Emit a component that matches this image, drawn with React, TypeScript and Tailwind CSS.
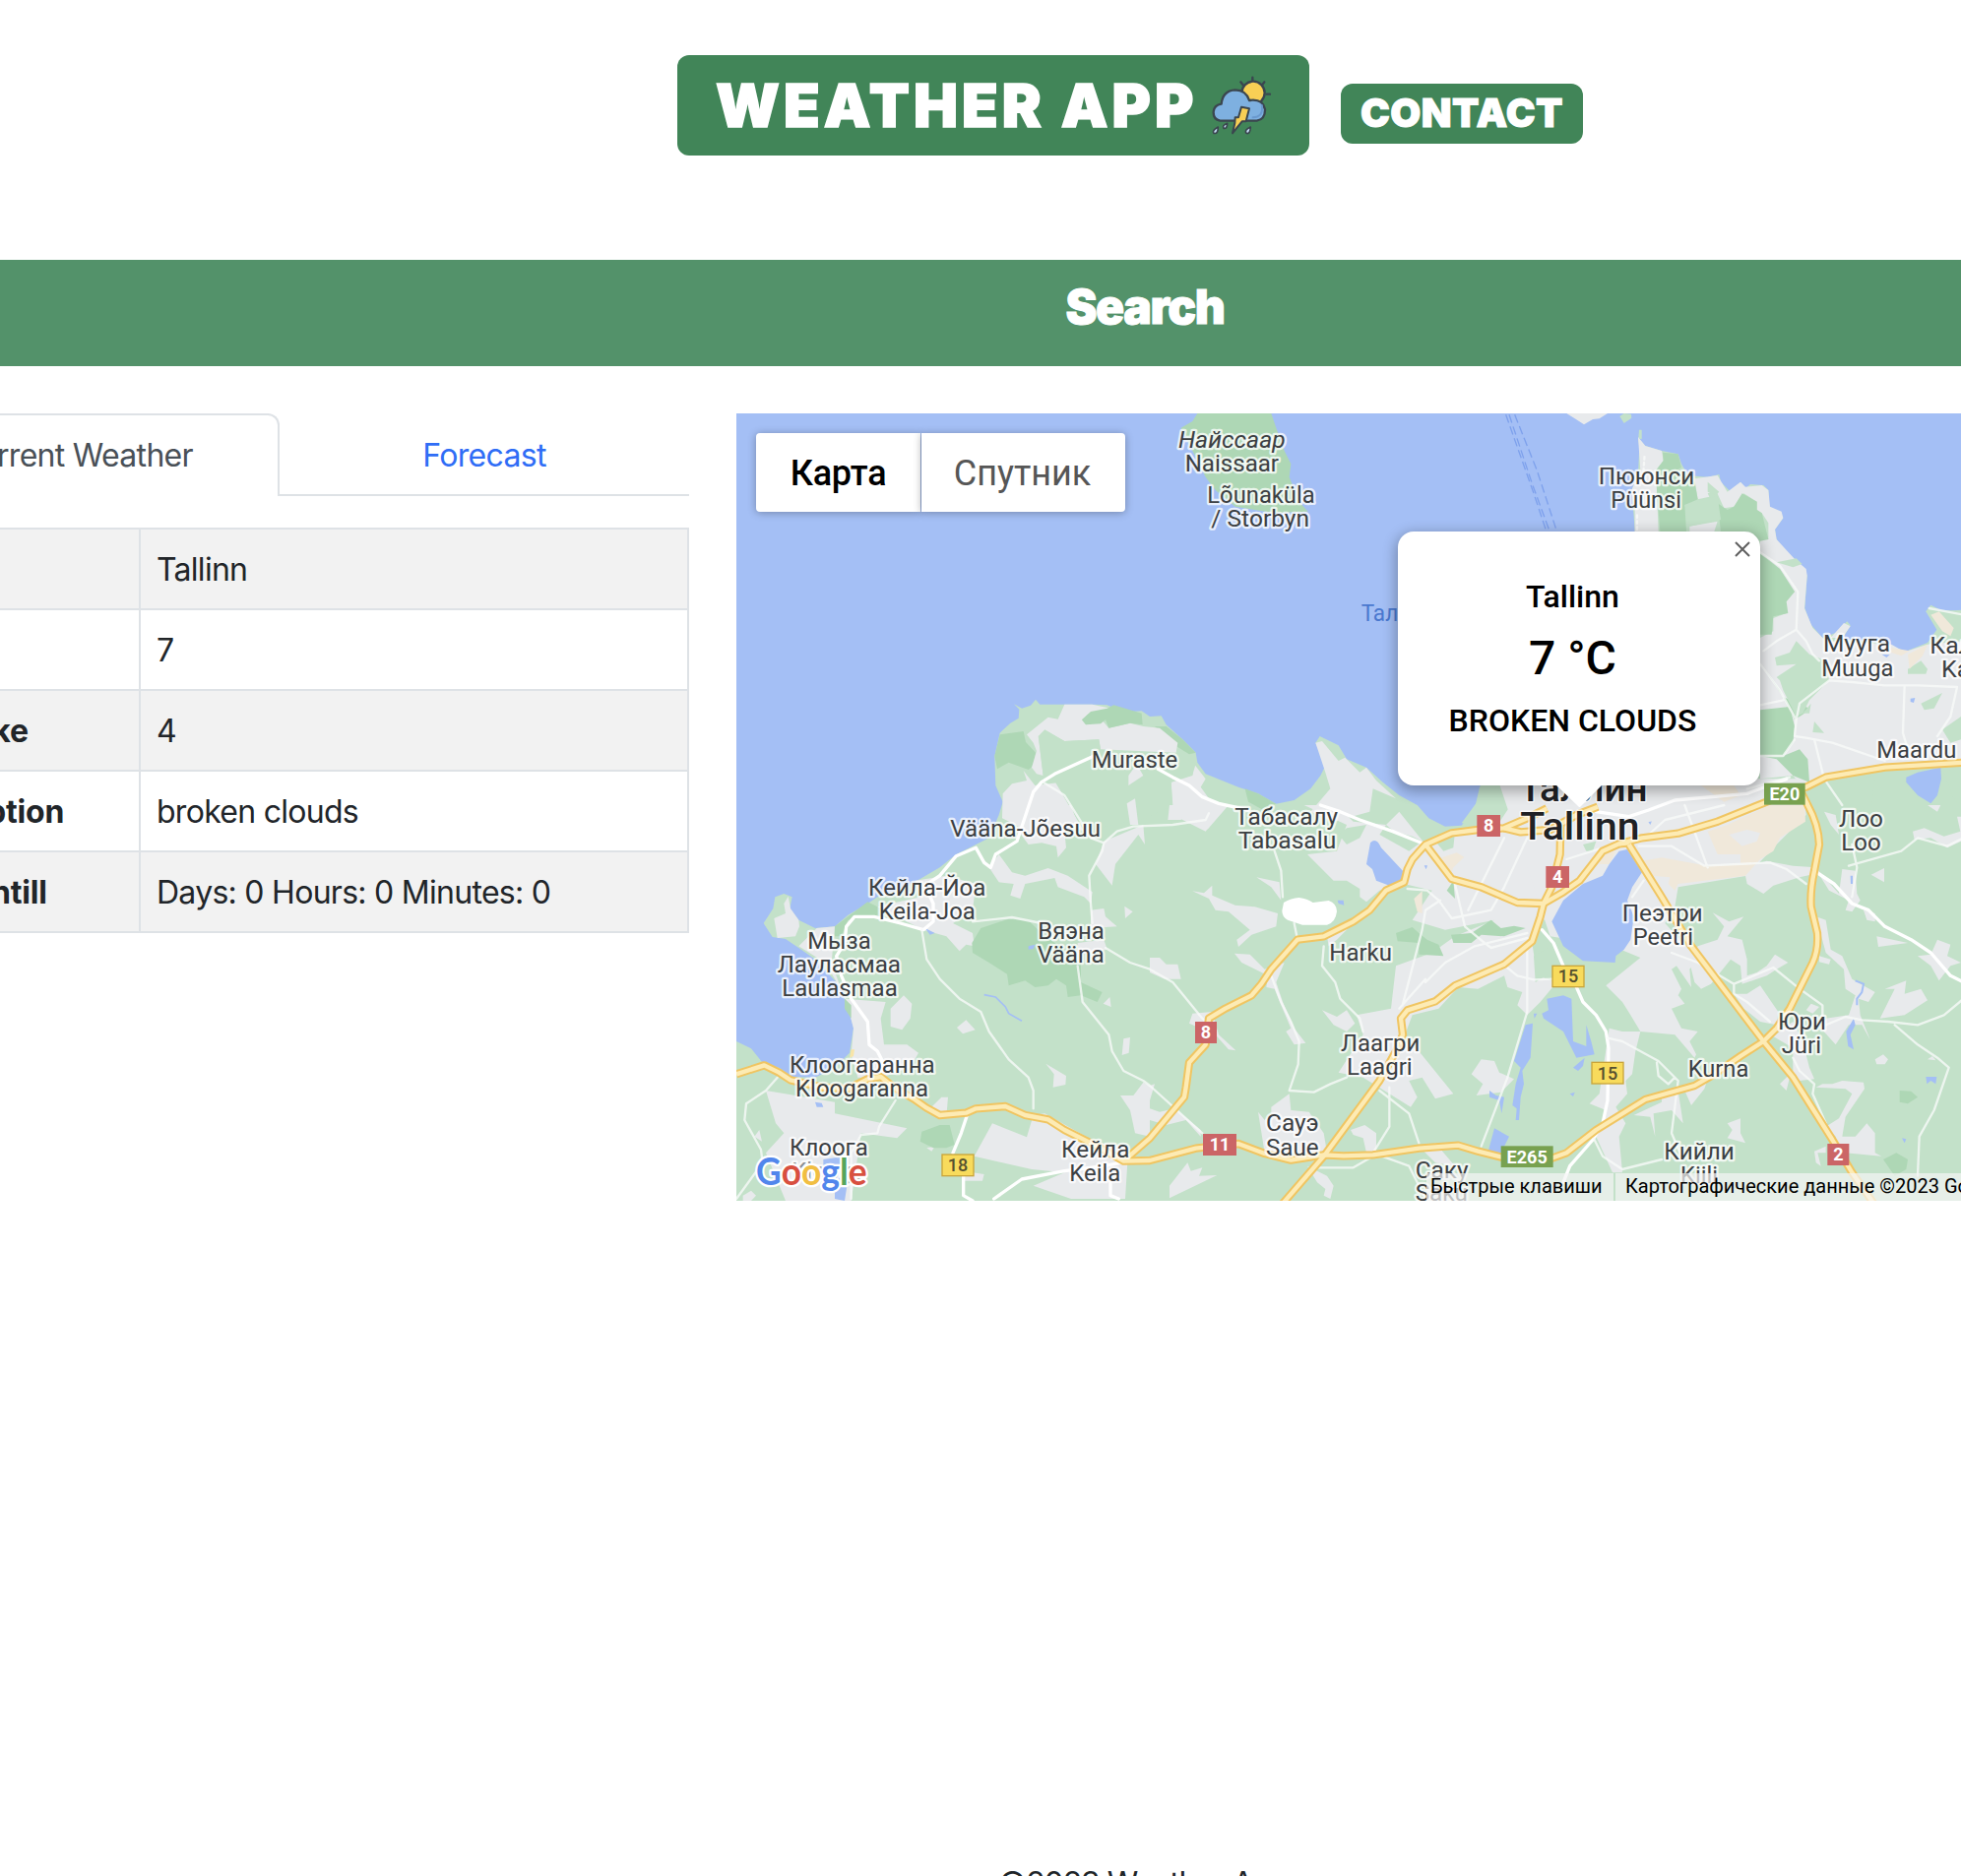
import React from "react";

const GREEN = "#c3e1c9";
const WOOD = "#aed7b5";
const TOWN = "#e8eaec";
const WATER = "#a4bff5";
const SAND = "#f0e8da";

type Label = { t: string; x1: number; x2: number; y: number; size?: number; color?: string; italic?: boolean; weight?: number; halo?: boolean };

const labels: Label[] = [
  { t: "Muraste", x1: 1085, x2: 1342, y: 1087 },
  { t: "Vääna-Jõesuu", x1: 655, x2: 1107, y: 1297 },
  { t: "Кейла-Йоа", x1: 405, x2: 757, y: 1475 },
  { t: "Keila-Joa", x1: 437, x2: 725, y: 1547 },
  { t: "Мыза", x1: 220, x2: 407, y: 1638 },
  { t: "Лауласмаа", x1: 128, x2: 498, y: 1710 },
  { t: "Laulasmaa", x1: 142, x2: 488, y: 1783 },
  { t: "Вяэна", x1: 922, x2: 1118, y: 1608 },
  { t: "Vääna", x1: 920, x2: 1118, y: 1681 },
  { t: "Клоогаранна", x1: 165, x2: 602, y: 2015 },
  { t: "Kloogaranna", x1: 183, x2: 582, y: 2088 },
  { t: "Клоога", x1: 165, x2: 398, y: 2268 },
  { t: "Klooga", x1: 172, x2: 390, y: 2341, color: "#8b8f92" },
  { t: "Кейла", x1: 993, x2: 1195, y: 2275 },
  { t: "Keila", x1: 1018, x2: 1168, y: 2346 },
  { t: "Найссаар", x1: 1350, x2: 1670, y: 110, italic: true },
  { t: "Naissaar", x1: 1370, x2: 1650, y: 182 },
  { t: "Lõunaküla", x1: 1438, x2: 1760, y: 278 },
  { t: "/ Storbyn", x1: 1450, x2: 1743, y: 350 },
  { t: "Таллиннский", x1: 1907, x2: 2320, y: 640, color: "#4a78cf", halo: false },
  { t: "Пююнси", x1: 2630, x2: 2917, y: 222 },
  { t: "Püünsi", x1: 2668, x2: 2877, y: 295 },
  { t: "Мууга", x1: 3315, x2: 3513, y: 733 },
  { t: "Muuga", x1: 3310, x2: 3523, y: 806 },
  { t: "Каллавере", x1: 3640, x2: 4010, y: 738 },
  { t: "Kallavere", x1: 3675, x2: 3975, y: 810 },
  { t: "Maardu", x1: 3478, x2: 3715, y: 1057 },
  { t: "Табасалу", x1: 1522, x2: 1830, y: 1260 },
  { t: "Tabasalu", x1: 1532, x2: 1825, y: 1332 },
  { t: "Harku", x1: 1810, x2: 1995, y: 1673 },
  { t: "Лаагри", x1: 1845, x2: 2080, y: 1950 },
  { t: "Laagri", x1: 1863, x2: 2057, y: 2022 },
  { t: "Сауэ", x1: 1617, x2: 1772, y: 2194 },
  { t: "Saue", x1: 1617, x2: 1772, y: 2267 },
  { t: "Саку", x1: 2072, x2: 2228, y: 2338 },
  { t: "Saku", x1: 2072, x2: 2226, y: 2406 },
  { t: "Лоо", x1: 3363, x2: 3492, y: 1265 },
  { t: "Loo", x1: 3370, x2: 3485, y: 1337 },
  { t: "Пеэтри", x1: 2702, x2: 2942, y: 1553 },
  { t: "Peetri", x1: 2735, x2: 2913, y: 1626 },
  { t: "Юри", x1: 3177, x2: 3318, y: 1885 },
  { t: "Jüri", x1: 3188, x2: 3303, y: 1957 },
  { t: "Kurna", x1: 2903, x2: 3082, y: 2027 },
  { t: "Кийли", x1: 2830, x2: 3038, y: 2280 },
  { t: "Kiili", x1: 2880, x2: 2988, y: 2352 },
  { t: "Таллин", x1: 2388, x2: 2774, y: 1187, size: 114, color: "#202124", weight: 500 },
  { t: "Tallinn", x1: 2392, x2: 2750, y: 1306, size: 114, color: "#202124", weight: 500 },
];

type Shield = { t: string; x: number; y: number; w: number; h: number; kind: "red" | "yellow" | "green" };

const shields: Shield[] = [
  { t: "18", x: 625, y: 2263, w: 100, h: 69, kind: "yellow" },
  { t: "8", x: 2257, y: 1230, w: 71, h: 66, kind: "red" },
  { t: "4", x: 2467, y: 1386, w: 71, h: 66, kind: "red" },
  { t: "15", x: 2485, y: 1688, w: 100, h: 68, kind: "yellow" },
  { t: "8", x: 1398, y: 1860, w: 66, h: 66, kind: "red" },
  { t: "11", x: 1422, y: 2202, w: 102, h: 66, kind: "red" },
  { t: "E265", x: 2330, y: 2239, w: 159, h: 65, kind: "green" },
  { t: "15", x: 2605, y: 1982, w: 100, h: 69, kind: "yellow" },
  { t: "2", x: 3325, y: 2232, w: 66, h: 66, kind: "red" },
  { t: "E20", x: 3132, y: 1133, w: 125, h: 66, kind: "green" },
];
const shieldFill = { red: "#cb6566", yellow: "#f8db5c", green: "#78a150" };
const shieldInk = { red: "#fff", yellow: "#55502f", green: "#fff" };

const highways = [
  "M0 2020L85 1993L130 2015L165 2038L260 2060L340 2065L400 2035L440 2028L480 2060L540 2095L580 2123L620 2145L700 2138L730 2125L820 2118L880 2145L950 2158L1000 2190L1100 2240L1180 2285L1260 2283L1400 2246L1530 2232L1610 2262L1690 2282L1790 2266L1850 2269L1940 2266L2080 2246L2200 2237L2260 2255L2340 2275L2480 2278L2530 2260L2620 2190L2770 2097L2920 2055L2980 2020L3060 1965L3130 1920L3170 1880L3210 1820L3280 1680Q3298 1640 3294 1590L3275 1510Q3272 1460 3285 1400L3300 1320Q3298 1260 3265 1200L3240 1150",
  "M1180 2285L1260 2215L1365 2090L1370 2060L1380 1985L1430 1930L1440 1850L1490 1820L1570 1780L1600 1745L1630 1700L1710 1610L1790 1600L1880 1555L1930 1520L1980 1460L2035 1435L2045 1395L2060 1365L2100 1320L2180 1285L2260 1275L2340 1270L2410 1240L2470 1210",
  "M2340 1270L2390 1282L2480 1275L2560 1230L2625 1205",
  "M2100 1320L2180 1425L2270 1450L2380 1497L2460 1500L2520 1465L2570 1430L2640 1340L2690 1318L2720 1315",
  "M1660 2420L1790 2270L1960 2040L2010 1950L2031 1900L2025 1850L2045 1825L2130 1798L2190 1750L2340 1685L2425 1615L2450 1540L2460 1500L2485 1450L2510 1350L2512 1250",
  "M2720 1320L2820 1480L2910 1630L3130 1920L3220 2030L3340 2220L3400 2320L3470 2420",
  "M2690 1318L2760 1300L2870 1286L2990 1250L3140 1190L3200 1165L3260 1145L3320 1115L3500 1085L3740 1070",
];

const coast =
  "M0 1920L45 1942L80 1985L130 2000L170 2028L240 2030L300 2000L345 1955L357 1880L345 1830L330 1795L325 1760L300 1735L240 1670L190 1635L150 1608L110 1602L83 1560L112 1515L118 1480L145 1470L170 1480L163 1515L190 1550L240 1575L300 1570L340 1535L400 1500L430 1480L500 1455L560 1425L620 1390L670 1350L720 1325L770 1300L800 1230L812 1190L790 1140L787 1050L803 980L835 950L860 935L862 908L846 892L870 905L897 896L912 878L925 893L1085 893L1130 895L1160 908L1200 915L1235 913L1260 930L1295 928L1310 955L1360 1000L1400 1040L1405 1070L1430 1105L1530 1145L1590 1165L1645 1196L1700 1185L1750 1150L1780 1110L1795 1080L1765 1010L1778 990L1835 1018L1860 1060L1920 1085L1970 1130L2020 1170L2075 1200L2110 1240L2160 1265L2210 1262L2250 1210L2265 1145L2350 1000L2600 700L2738 366L2735 320L2728 240L2748 190L2752 110L2748 80L2770 105L2820 120L2870 130L2880 160L2900 195L2960 200L2995 192L3000 215L3030 245L3060 215L3075 235L3090 222L3130 225L3145 240L3148 290L3165 305L3180 303L3190 325L3165 360L3170 390L3190 420L3225 450L3255 480L3263 500L3256 600L3275 650L3310 690L3350 675L3385 640L3395 652L3370 695L3430 700L3500 705L3560 733L3630 705L3658 665L3625 610L3640 592L3675 610L3740 605L3740 2420L0 2420Z";

function MapCanvas() {
  return (
    <svg className="block h-full w-full" viewBox="0 6 3732 2400" preserveAspectRatio="none" aria-label="Tallinn">
      <rect width="3740" height="2420" fill={WATER} />
      <path d={coast} fill={GREEN} />
      {/* Naissaar and the northern islets */}
      <path d="M1405 6L1390 30L1355 50L1390 120L1430 200L1460 240L1520 290L1640 310L1742 305L1715 275L1685 200L1690 160L1670 120L1645 50L1630 6Z" fill={WOOD} />
      <path d="M2530 6L2560 25L2583 40L2610 24L2630 22L2655 6Z" fill={TOWN} />
      <path d="M2692 15L2705 6L2727 8L2728 20L2705 36ZM2751 56L2759 56L2759 85L2749 82Z" fill={GREEN} />
      {/* ferry lines */}
      <path d="M2345 10L2430 250L2470 370M2372 10L2440 180L2500 365M2355 10L2425 220L2480 370" stroke="#7ea1ec" strokeWidth="4" strokeDasharray="26 12" fill="none" />

      {/* Muraste and the north-west coast */}
      <g>
        <g fill={WOOD}>
          <path d="M803 985L875 975L882 1008L912 1040L905 1080L890 1092L830 1070L795 1090L787 1050Z" />
          <path d="M1275 960L1310 960L1360 1000L1400 1040L1380 1045L1340 1020Z" />
          <path d="M1550 1150L1590 1165L1645 1196L1600 1212L1560 1190Z" />
        </g>
        <g fill={TOWN}>
          <path d="M1000 893L1085 893L1140 905L1110 918L1075 920L1053 940L1065 955L1115 942L1135 965L1200 950L1240 960L1290 965L1345 1010L1340 1040L1110 1030L1105 1000L1000 1005L940 970L920 990L935 1110L915 1105L900 1085L915 1035L905 1010L885 985L950 932L980 938Z" />
          <path d="M812 1165L840 1135L885 1125L875 1095L910 1140L990 1130L990 1160L1060 1280L1020 1265L870 1270L810 1240Z" />
          <path d="M1325 1130L1390 1110L1440 1180L1490 1200L1430 1280L1330 1230ZM1395 1075L1430 1120L1415 1145L1390 1110Z" />
          <path d="M1765 1010L1785 1005L1835 1065L1855 1055L1900 1100L1920 1085L1950 1125L2010 1180L1940 1150L1930 1220L1820 1250L1750 1220L1810 1150L1795 1100Z" />
        </g>
        <path d="M1053 940L1080 915L1130 905L1150 895L1235 920L1238 955L1200 950L1135 965L1125 940L1110 952L1065 955Z" fill={WOOD} />
        {/* open fields between the settlements */}
        <path d="M1110 1032L1340 1042L1400 1075L1390 1108L1325 1130L1330 1200L1250 1240L1150 1260L1060 1280L990 1160L960 1110L935 1110L922 1000L940 972L1000 1005L1105 1000Z" fill={GREEN} />
        <path d="M1195 1110L1220 1075L1240 1110L1195 1140ZM1190 1195L1215 1180L1225 1260L1200 1260Z" fill={TOWN} />
      </g>

      {/* Keila-Joa and Kloogaranna */}
      <g transform="translate(0 1200)">
        <g fill={TOWN}>
          <path d="M115 345L150 330L145 300L158 278L165 315L190 350L192 370L180 400L125 405Z" />
          <path d="M190 430L245 375L300 370L290 480L330 590L455 600L440 650L450 730L520 730L555 755L530 800L440 830L370 830L350 760L357 680L330 580L270 480Z" />
          <path d="M545 230L640 215L730 240L720 320L660 360L720 390L725 430L700 425L680 445L640 400L570 380L430 310L560 280Z" />
          <path d="M770 190L800 150L840 205L880 215L950 192L1010 215L1085 265L1080 300L1060 280L980 250L970 222L880 240L865 285L835 275L845 240L800 235Z" />
          <path d="M820 0L1020 0L1040 60L1000 80L1005 130L980 160L975 125L930 115L890 120L860 80L860 30Z" />
          <path d="M1120 110L1240 60L1245 120L1225 90L1155 180L1145 245L1095 180ZM1080 320L1120 315L1125 340L1160 370L1080 375ZM1183 308L1208 325L1185 345Z" />
          <path d="M1040 420L1120 410L1130 440L1040 455ZM1118 605L1138 585L1142 615ZM1180 712L1200 708L1196 755L1175 762Z" />
          <path d="M470 620L510 580L535 605L530 650L505 685L470 675ZM672 678L700 655L728 685L690 697ZM943 788L1005 825L1003 852L965 860L968 820Z" />
          <path d="M90 870L180 885L300 905L300 940L520 985L490 1015L380 1000L350 1206L150 1206L90 1060L145 1000L120 970ZM590 925L625 890L645 890L640 950Z" />
          <path d="M780 970L885 1012L905 945L940 940L1100 1030L1195 1040L1185 1200L1020 1200L905 1160L1000 1120L900 1110L725 1070ZM1170 885L1210 885L1240 845L1260 855L1260 1010L1215 1000L1200 930Z" />
          <path d="M20 1190L45 1175L60 1190L45 1206L20 1206ZM580 1045L605 1040L595 1055ZM690 1115L755 1125L750 1145L690 1145ZM55 1010L70 990L78 1025Z" />
        </g>
        <g fill={WOOD}>
          <path d="M745 375L830 347L890 352L930 390L1050 480L1050 540L1115 570L1100 600L1050 580L1010 585L1005 550L975 530L950 550L910 555L880 535L830 550L825 515L770 480L720 450L718 420Z" />
          <path d="M565 995L620 975L650 975L665 1035L640 1045L600 1045L560 1025ZM300 370L400 295L430 310L430 335L340 350L320 400L300 400ZM330 590L350 610L350 650L330 620Z" />
        </g>
        <g fill={WATER}>
          <path d="M265 1080L330 1070L345 1110L330 1206L300 1200L300 1130L265 1110ZM240 905L260 908L265 920L245 920ZM890 430L910 425L905 438L890 440ZM575 375L605 390L590 395Z" />
        </g>
        <path d="M755 578L790 585L820 615L830 635L870 658" stroke={WATER} strokeWidth="5" fill="none" />
        <path d="M350 745L360 745L357 765L345 770Z" fill="#f8e5a8" />
      </g>

      {/* Tabasalu, Harku, Saue and western Tallinn */}
      <g transform="translate(1260 1200)">
        <g fill={TOWN}>
          <path d="M60 0L115 0L95 45L55 45ZM175 45L200 0L240 0L175 75ZM470 0L570 0L620 50L720 60L760 20L840 120L780 190L760 220L780 240L700 260L660 295L640 280L640 255L600 230L560 230L480 150L570 140L600 60Z" />
          <path d="M840 120L950 70L1060 60L1100 0L1260 0L1260 310L1200 350L1165 420L1180 520L1240 540L1190 600L1150 640L1120 610L1135 570L1090 555L1080 520L1000 560L940 555L880 620L800 640L770 720L820 750L925 880L870 895L830 830L790 840L815 890L795 920L730 880L650 830L575 815L650 700L630 640L735 620L750 490L860 450L930 400L1050 350L900 380L800 350L860 260L775 240L800 160Z" />
          <path d="M130 262L165 268L190 245L190 275L260 305L320 310L390 330L385 370L310 395L270 432L265 410L305 380L240 325L200 320L180 285ZM325 220L395 235L400 290L370 250Z" />
          <path d="M0 465L30 465L50 485L85 485L95 530L45 530L0 510ZM258 452L305 455L350 500L410 480L385 540L405 600L440 680L475 725L440 730L415 690L430 680L400 610L380 560L355 555L360 520L280 480Z" />
          <path d="M130 635L190 630L210 700L262 748L240 745L200 700L120 665ZM540 400L610 370L570 410L545 430ZM525 625L570 645L600 625L625 665L600 690L560 670Z" />
          <path d="M0 925L30 935L75 925L155 990L155 1010L110 960L50 975L0 960ZM370 920L425 880L430 930L485 935L530 1000L540 1060L350 1060L330 935L350 960L370 940Z" />
          <path d="M60 1160L115 1090L125 1115L160 1105L150 1130L205 1128L60 1198ZM480 1100L540 1130L560 1160L550 1200L530 1190L535 1170L510 1150ZM612 990L655 975L690 1000L690 1060L660 1060L650 1015L620 1005Z" />
          <path d="M980 820L1010 775L1050 780L1065 815L1110 835L1070 875L995 885L1015 850ZM830 1050L870 1030L930 1100L870 1090ZM0 855L15 850L0 900Z" />
        </g>
        <g fill={GREEN}>
          <path d="M600 70L660 60L640 100L600 120L575 90ZM720 60L745 80L800 95L830 110L790 140L700 90ZM870 110L930 80L925 130L895 140ZM1170 460L1240 420L1240 500L1175 540Z" />
          <path d="M950 55L1005 -20L1060 -55L1085 10L1060 55Z" />
        </g>
        <g fill={WOOD}>
          <path d="M750 390L800 372L820 390L845 410L880 425L895 460L820 455L820 420L755 415ZM918 395L980 390L1040 350L1070 375L1110 368L1145 375L1080 400L1010 395L980 420L925 420ZM905 260L925 230L930 285Z" />
        </g>
        <path d="M890 160L935 145L958 158L925 190L915 215L890 180ZM805 285L830 262L830 330L815 325Z" fill={SAND} />
        <g fill={WATER}>
          <path d="M672 115Q690 95 705 130L775 205L770 235L730 245L690 230L678 195L660 180ZM572 290L590 290L592 305L575 300ZM836 184L846 184L842 196Z" />
          <path d="M1145 670L1167 665L1160 770L1135 810L1140 850L1130 890L1125 960L1115 960L1118 925L1105 915L1115 850L1130 800L1110 780ZM1035 870L1055 885L1080 890L1072 940L1065 900L1035 890ZM1050 985L1095 1010L1065 1070L1030 1060ZM1210 590L1260 580L1285 590L1290 720L1330 735L1330 670L1345 720L1355 760L1300 770L1260 690L1200 650L1195 635L1215 625ZM1170 635L1180 635L1172 650Z" />
        </g>
      </g>

      {/* eastern Tallinn, Peetri and Jüri */}
      <g transform="translate(2520 1200)">
        <g fill={TOWN}>
          <path d="M-200 -80L730 -80L740 30L640 130L560 215L350 250L340 310L310 360L410 470L385 500L390 555L345 490L330 500L360 560L350 580L370 605L330 620L360 680L410 690L385 720L405 760L400 770L340 700L235 690L205 640L180 600L130 550L235 465L150 430L-40 400Z" />
          <path d="M550 190L620 170L700 185L770 190L765 210L720 220L640 245L610 270L560 240ZM760 180L840 270L850 195L890 200L895 270L905 290L880 325L860 320L870 290L810 260ZM938 212L978 192L978 235Z" />
          <path d="M795 20L830 30L840 90L815 60ZM1065 80L1100 70L1160 95L1210 80L1200 35L1212 35L1212 110L1170 130L1120 100L1070 105ZM1110 0L1150 0L1140 20Z" />
          <path d="M455 328L505 355L550 340L500 400L545 410L560 470L560 520L590 510L620 490L645 455L685 480L650 500L620 520L545 545L540 490L510 470L450 545L420 560L400 540L385 480L410 430L470 410L490 370Z" />
          <path d="M770 340L800 350L815 440L850 460L880 530L950 570L930 600L900 590L905 640L935 715L910 670L870 670L830 730L785 680L800 650L870 640L890 580L860 560L855 500L800 450ZM780 460L815 470L810 485L780 478Z" />
          <path d="M955 400L1050 420L960 432ZM1080 460L1120 455L1140 410L1180 425L1170 460L1212 480L1180 490L1145 535L1120 490ZM915 320L950 330L950 355L925 350ZM965 650L1010 560L980 560L1045 535L1040 575L1090 560L1110 595L1040 640Z" />
          <path d="M520 575L560 575L600 550L655 630L650 670L600 660L550 620ZM740 625L755 605L780 615L760 635ZM640 705L700 660L730 720L750 800L765 835L720 840L690 830L680 870L660 850L700 810L700 740ZM950 775L975 760L990 775L980 790L955 790Z" />
          <path d="M770 860L790 850L820 850L850 840L915 845L918 865L860 950L850 1010L890 1010L925 970L950 1000L950 1060L970 1070L860 1060L840 1060L830 1010L800 980L840 955L880 880L860 865ZM765 1055L800 1040L800 1060L775 1060L785 1100L770 1090Z" />
          <path d="M140 680L180 690L235 690L220 750L210 820L190 840L195 880L160 920L190 970L170 1010L180 1120L150 1120L100 1010L130 930L80 910L110 880ZM215 945L300 905L300 880L350 870L365 970L330 930L275 940L280 1010L265 950ZM370 870L440 835L430 865L390 915ZM500 970L540 955L540 1000L555 1030L500 1015L515 990ZM1110 775L1125 765L1135 778Z" />
        </g>
        <g fill={SAND}>
          <path d="M500 60L630 0L735 0L738 50L660 100L640 140L600 165L555 215L350 240L340 260L320 240L325 220L270 215L240 170L300 160L440 185L540 180L540 150L470 150L440 80ZM120 150L160 140L140 180L110 180Z" />
        </g>
        <path d="M505 90L560 75L600 85L590 110L545 125ZM440 150L480 150L475 180L445 180Z" fill={TOWN} />
        <path d="M60 120L100 110L90 140L70 140ZM170 0L215 0L210 20L180 15Z" fill={GREEN} />
        <g fill={WATER}>
          <path d="M170 140L195 135L240 205L210 250L195 290L215 340L205 410L185 440L160 460L158 480L60 475L0 430L-35 355L0 290L60 240L120 215L140 180ZM252 40L280 25L265 60ZM1105 828L1138 828L1135 850L1120 840L1108 850ZM1032 1015L1045 1018L1040 1030ZM20 880L35 875L30 888ZM30 800L65 770L60 795L45 810ZM862 690L885 650L890 670L875 700L885 745L868 735ZM875 215L882 215L882 240L876 240Z" />
        </g>
        <path d="M890 535L915 545L910 570L895 590L895 610" stroke={WATER} strokeWidth="6" fill="none" />
        <path d="M1025 870L1060 872L1080 890L1050 910L1025 905ZM975 1080L1015 1060L1050 1080L1045 1110L1010 1130Z" fill={WOOD} />
      </g>

      {/* Viimsi, Muuga and Maardu */}
      <g transform="translate(2520 0)">
        <g fill={TOWN}>
          <path d="M228 78L250 105L300 120L305 150L282 180L285 240L290 366L218 366L218 300L208 240L235 180ZM400 205L470 195L500 245L540 215L555 230L605 225L625 240L630 290L665 305L670 325L645 360L650 390L705 450L740 480L743 500L735 600L760 660L800 700L1000 710L1040 733L1110 710L1220 700L1220 1070L980 1085L800 1115L730 1145L700 1110L600 1120L600 690L640 670L640 630L680 615L670 580L705 550L660 480L600 430L600 366L625 390L625 340L605 310L590 300L590 275L550 250L520 290L490 295L465 240L440 250L445 260L410 268ZM385 350L470 335L460 366L385 366Z" />
        </g>
        <g fill={WOOD}>
          <path d="M303 125L350 130L360 170L345 180L400 215L410 268L370 285L375 366L295 366L285 240L282 180L305 150ZM470 280L500 300L520 290L545 250L590 275L590 300L605 310L625 390L600 395L570 366L480 366ZM600 435L660 480L705 550L680 580L685 615L640 625L635 680L600 680ZM610 780L670 870L750 905L735 920L705 940L660 850ZM600 910L690 900L705 960L700 1010L670 1050L720 1030L745 1060L750 1130L700 1110L650 1060L600 1050Z" />
        </g>
        <g fill={GREEN}>
          <path d="M370 285L470 258L480 330L385 350ZM650 460L710 448L728 465L700 475ZM645 750L690 735L710 700L750 740L800 760L810 820L780 850L750 880L730 920L710 930L670 850L660 820L650 810L710 770L650 775ZM765 945L795 980L760 978ZM1090 890L1155 858L1130 905L1100 910ZM1050 785L1090 760L1110 785L1105 800L1050 800ZM1155 970L1212 930L1212 1000L1180 1010ZM1105 610L1120 590L1150 605L1212 608L1212 650L1190 640L1160 610L1120 625ZM280 1180L350 1145L340 1200L290 1200ZM730 920L755 890L750 920ZM760 1150L950 1110L940 1200L750 1200ZM1160 1100L1212 1080L1212 1200L1190 1180ZM440 215L475 245L465 255L440 245Z" />
        </g>
        <path d="M1120 620L1145 610L1190 660L1180 685L1155 670ZM1000 720L1055 730L1030 745L1000 735ZM1050 740L1110 710L1095 745L1055 785Z" fill={SAND} />
        <path d="M1045 1115L1080 1100L1150 1085L1152 1120L1140 1170L1120 1195L1080 1170L1045 1130ZM1058 875L1072 873L1068 888L1058 885ZM970 740L995 742L985 750Z" fill={WATER} />
        <path d="M855 645L875 655L850 690L815 690Z" fill={TOWN} />
      </g>
      <path d="M2520 1225L2700 1160L2850 1140L3080 1150L3060 1190L2900 1230L2560 1290Z" fill={TOWN} />
      <path d="M2940 1140L3040 1140L3060 1170L3010 1190Z" fill={SAND} />

      {/* local roads */}
      <g stroke="#fff" fill="none" strokeLinejoin="round" strokeLinecap="round" strokeWidth="10">
        <path d="M1090 1050L970 1105L930 1130L905 1160L885 1220L855 1310L790 1350L775 1390L755 1375L730 1330L670 1355L620 1415L575 1445L600 1500L600 1555L570 1580L500 1560L420 1540L360 1540L335 1570L330 1620L305 1660L320 1720L350 1790L400 1860L405 1930L430 1950L445 1980L440 2030" />
        <path d="M1285 1090L1330 1115L1380 1140L1420 1175L1470 1195L1560 1215M1780 1200L1840 1220L1900 1245L2000 1280L2100 1320M705 2140L685 2200L660 2260M692 2320L692 2390L720 2406M785 2400L870 2340L1000 2315L1120 2300L1170 2290M1140 2330L1140 2390L1165 2400" />
        <path d="M2455 1580L2490 1620L2520 1690L2545 1720L2580 1800L2620 1840L2650 1890L2658 1940L2655 2100L2640 2170L2610 2220L2540 2300L2520 2350" />
        <path d="M3300 1410L3345 1440L3400 1500L3450 1520L3500 1570L3580 1610L3640 1650L3700 1720L3740 1740" />
        <path d="M2620 1220L2720 1235L2780 1215L2860 1185L3080 1165L3200 1120" />
      </g>
      <g stroke="#f8faf9" strokeOpacity="0.8" fill="none" strokeLinejoin="round" strokeLinecap="round" strokeWidth="7">
        <path d="M935 1130L1000 1170L1050 1250L1080 1300L1120 1315L1115 1340L1075 1415L1080 1500L1085 1560M720 1555L840 1542L930 1560M1120 1315L1160 1280L1210 1265L1330 1260L1430 1245L1440 1225M565 1580L580 1670L620 1730L680 1790L745 1830L770 1890L830 1975L890 2030L905 2070L905 2125M1040 1690L1055 1800L1135 1900L1145 1950L1180 2010L1240 2040L1260 2055L1420 2200M1125 1635L1200 1680L1260 1700L1330 1740L1420 1850L1450 1880" />
        <path d="M485 2100L435 2180L430 2200L380 2205L350 2260L350 2400M125 2030L90 2070L30 2110L25 2160L75 2250L80 2290L0 2400M1640 1340L1660 1400L1665 1480M1700 1560L1708 1600M1790 1630L1785 1690L1825 1740L1840 1790L1900 1850L1910 1890M1630 1720L1660 1800L1690 1860L1715 1920L1712 1990L1685 2070L1760 2075L1810 2050L1860 2030" />
        <path d="M2045 1455L2105 1460L2140 1490L2180 1545L2300 1520L2340 1450L2410 1300M2145 1490L2100 1520L2090 1580L2030 1810M2100 1740L2160 1680L2250 1630L2410 1590M2190 1440L2220 1570L2280 1620L2300 1635L2410 1605M2340 1300L2230 1520M2020 1820L2100 1730M1960 2070L2050 2140L2080 2230M1990 2060L1990 2180L1940 2260L2050 2300L2100 2400M2410 1640L2410 1830L2350 2030L2270 2240M1770 2305L1880 2305L1940 2270M2330 1680L2380 1720L2430 1732L2490 1730" />
        <path d="M2530 1365L2640 1330M2750 1325L2850 1325L2950 1385L3150 1375L3200 1395L3260 1440M2890 1200L2960 1390M2780 1290L2830 1245L3010 1200M2765 1430L2730 1480M3390 1385L3550 1340L3600 1300L3690 1325L3740 1300M3400 1320L3415 1390L3400 1480M3080 1150L3210 1115M3740 1790L3680 1840L3600 1870L3510 1860L3430 1855L3380 1845L3320 1870M3530 1870L3600 1930L3660 1970L3695 2000L3650 2130L3605 2210L3600 2330M2655 1910L2700 1920L2810 1980L2870 2040L2850 2200L2880 2270M2805 1985L2810 2025L2840 2050L2860 2030M3040 1745L3160 1695L3240 1760L3310 1810L3310 1850M2850 1650L2930 1680L3040 1745L3040 1775L3080 1800L3150 1860M3220 1970L3240 2010L3285 2050L3280 2080L3320 2170M2610 2210L2640 2270L2700 2310L2820 2280" />
        <path d="M3120 430L3180 470L3235 550L3230 665L3260 700L3280 740L3300 760M3230 665L3170 700L3130 730M3230 940L3240 890L3330 820L3400 825L3500 835L3600 835L3720 840L3700 930L3660 990M3560 835L3555 980L3570 1030M3120 770L3180 850L3230 940L3225 990L3260 995L3340 1010L3500 1065M3225 1000L3190 1050L3120 1050M3285 1000L3315 1120L3370 1200M3120 895L3190 880M3635 600L3740 620" />
        <path d="M2763 200L2768 130M2745 360L2745 310" strokeDasharray="8 10" />
      </g>

      <g stroke="#f0c562" strokeWidth="25" fill="none" strokeLinejoin="round">
        {highways.map((d) => (
          <path key={d} d={d} />
        ))}
      </g>
      <g stroke="#fdebb4" strokeWidth="13" fill="none" strokeLinejoin="round">
        {highways.map((d) => (
          <path key={d} d={d} />
        ))}
      </g>

      {/* blank spot near Harku */}
      <path d="M1663 1522L1668 1497Q1690 1483 1715 1482Q1740 1485 1757 1497L1805 1491Q1830 1500 1830 1524Q1826 1558 1800 1565L1725 1565L1680 1550Q1663 1542 1663 1522Z" fill="#fff" />

      <g className="font-['Roboto']">
        {shields.map((s) => (
          <g key={`${s.x}-${s.y}`}>
            <rect x={s.x + 2} y={s.y + 2} width={s.w - 4} height={s.h - 4} fill={shieldFill[s.kind]} stroke={s.kind === "yellow" ? "#caa53a" : shieldFill[s.kind]} strokeWidth="4" />
            <text x={s.x + s.w / 2} y={s.y + s.h / 2 + 19} textAnchor="middle" fontSize="54" fontWeight={s.kind === "yellow" ? 500 : 700} fill={shieldInk[s.kind]}>
              {s.t}
            </text>
          </g>
        ))}
        {labels.map((l) => (
          <text
            key={l.t + l.y}
            x={l.x1 - 3}
            y={l.y}
            textLength={l.x2 - l.x1 + 6}
            lengthAdjust="spacingAndGlyphs"
            fontSize={l.size ?? 71}
            fontWeight={l.weight ?? 400}
            fontStyle={l.italic ? "italic" : "normal"}
            fill={l.color ?? "#3c4043"}
            stroke={l.halo === false ? "none" : "#fff"}
            strokeOpacity="0.75"
            strokeWidth={l.size ? 9 : 14}
            strokeLinejoin="round"
            paintOrder="stroke"
          >
            {l.t}
          </text>
        ))}
      </g>

      <text x="60" y="2358" fontSize="114" textLength="338" lengthAdjust="spacingAndGlyphs" className="font-['Lato']" fontWeight="700" stroke="#fff" strokeWidth="14" strokeLinejoin="round" paintOrder="stroke">
        <tspan fill="#5286ec">G</tspan>
        <tspan fill="#d85040">o</tspan>
        <tspan fill="#f1be42">o</tspan>
        <tspan fill="#5286ec">g</tspan>
        <tspan fill="#58a55c">l</tspan>
        <tspan fill="#d85040">e</tspan>
      </text>
    </svg>
  );
}

function StormIcon() {
  return (
    <svg className="h-[62px] w-[62px]" viewBox="90 48 186 186" fill="none" stroke="#3b464f" strokeWidth="7" strokeLinecap="round" strokeLinejoin="round">
      <path d="M217 56V66M181 70L188 79M253 70L247 78M260 107H270" />
      <circle cx="219" cy="103" r="35" fill="#f8cf55" />
      <path d="M118 188Q97 184 98 161Q100 140 122 137Q126 96 164 94Q198 95 207 126Q248 120 255 153Q256 184 230 188Z" fill="#7eb0e0" />
      <path d="M245 140Q252 176 218 178" stroke="#6a99ce" strokeWidth="6" />
      <path d="M183 146L207 151L197 190H185L156 226L163 195L164 178H174Z" fill="#f8cf55" strokeWidth="6" />
      <path d="M112 207Q92 218 99 226Q112 230 112 207ZM140 196Q124 202 129 211Q140 213 140 196ZM211 207Q191 216 198 226Q210 230 211 207Z" fill="#c4dcf4" strokeWidth="5" />
    </svg>
  );
}

const rows = [
  { name: "City", value: "Tallinn" },
  { name: "Temp", value: "7" },
  { name: "Feels like", value: "4" },
  { name: "Description", value: "broken clouds" },
  { name: "Time untill", value: "Days: 0 Hours: 0 Minutes: 0" },
];

export default function App() {
  return (
    <div className="flex h-[1906px] w-full flex-col overflow-hidden bg-white font-['Inter',sans-serif] text-[32px] text-[#212529]">
      <header className="flex h-[264px] shrink-0 items-start gap-8 pt-14 pl-[688px] font-black whitespace-nowrap text-white">
        <div className="flex h-[102px] w-[642px] items-center justify-between rounded-xl bg-[#418558] pr-[38px] pl-[39px]">
          <span className="text-[60px] leading-none tracking-[4px] [-webkit-text-stroke:1.5px_white]">WEATHER APP</span>
          <StormIcon />
        </div>
        <div className="mt-[29px] flex h-[61px] w-[246px] items-center justify-center rounded-xl bg-[#418558] pb-0.5 text-[40px] leading-none tracking-[0.5px] [-webkit-text-stroke:1px_white]">
          CONTACT
        </div>
      </header>

      <div className="flex h-[108px] shrink-0 justify-center bg-[#53926a] pt-[21px] pl-[334px] text-[48px] leading-[54px] font-black tracking-[-1.4px] text-white [-webkit-text-stroke:1px_white]">
        Search
      </div>

      <main className="flex h-[1526px] shrink-0 items-start pt-12">
        <section className="-ml-[132px] w-[832px] shrink-0">
          <nav className="flex h-[84px] text-center leading-[80px] tracking-[-0.7px]">
            <div className="w-[416px] rounded-t-xl border-2 border-b-0 border-[#dee2e6] pt-px text-[#495057]">Current Weather</div>
            <div className="w-[416px] border-b-2 border-[#dee2e6] pt-[3px] text-[#2f6df6]">Forecast</div>
          </nav>
          <div className="mt-8 border-2 border-b-0 border-[#dee2e6]">
            {rows.map((r, i) => (
              <div key={r.name} className={i % 2 === 0 ? "flex h-[82px] border-b-2 border-[#dee2e6] bg-[#f2f2f2] leading-[82px]" : "flex h-[82px] border-b-2 border-[#dee2e6] bg-white leading-[82px]"}>
                <div className="w-[273px] border-r-2 border-[#dee2e6] pl-4 font-bold tracking-[-0.15px]">{r.name}</div>
                <div className="pl-4 tracking-[-0.72px]">{r.value}</div>
              </div>
            ))}
          </div>
        </section>

        <section className="relative ml-12 h-[800px] w-[1244px] shrink-0 overflow-hidden font-['Roboto',sans-serif] text-black">
          <MapCanvas />

          <div className="absolute top-5 left-5 flex h-20 w-[375px] text-[36px] leading-[82px]">
            <div className="w-[167px] rounded-l-[4px] bg-white text-center font-medium tracking-[-0.2px] shadow-[0_1px_8px_rgba(0,0,0,0.3)]">Карта</div>
            <div className="ml-px flex-1 rounded-r-[4px] bg-white pr-0.5 text-center text-[#565656] shadow-[0_1px_8px_rgba(0,0,0,0.3)]">Спутник</div>
          </div>

          <div className="absolute top-[120px] left-[672px] h-[258px] w-[368px] rounded-2xl bg-white pt-11 pr-[13px] text-center font-medium shadow-[0_4px_14px_2px_rgba(0,0,0,0.3)]">
            <p className="text-[32px] leading-[44px]">Tallinn</p>
            <p className="mt-[13px] text-[48px] leading-[56px]">7 °C</p>
            <p className="mt-[13px] text-[32px] leading-[44px]">BROKEN CLOUDS</p>
            <svg className="absolute top-[10px] right-[10px] h-4 w-4" viewBox="0 0 16 16" stroke="#5f5f5f" strokeWidth="2">
              <path d="M1 1L15 15M15 1L1 15" />
            </svg>
            <svg className="absolute top-[257px] left-[160px] h-6 w-12" viewBox="0 0 48 24">
              <path d="M0 0H48L25 23L24 23Z" fill="#fff" />
            </svg>
          </div>

          <div className="absolute right-0 bottom-0 flex h-7 gap-0.5 text-[20px] leading-[26px] whitespace-nowrap">
            <div className="w-[190px] bg-[#f5f5f5]/70 pl-1">Быстрые клавиши</div>
            <div className="w-[351px] overflow-hidden bg-[#f5f5f5]/70 pl-[10px]">Картографические данные ©2023 Google</div>
          </div>
        </section>
      </main>

      <footer className="shrink-0 pl-[1014px] leading-[32px] tracking-[-1.1px] whitespace-nowrap">©2023 Weather App</footer>
    </div>
  );
}
